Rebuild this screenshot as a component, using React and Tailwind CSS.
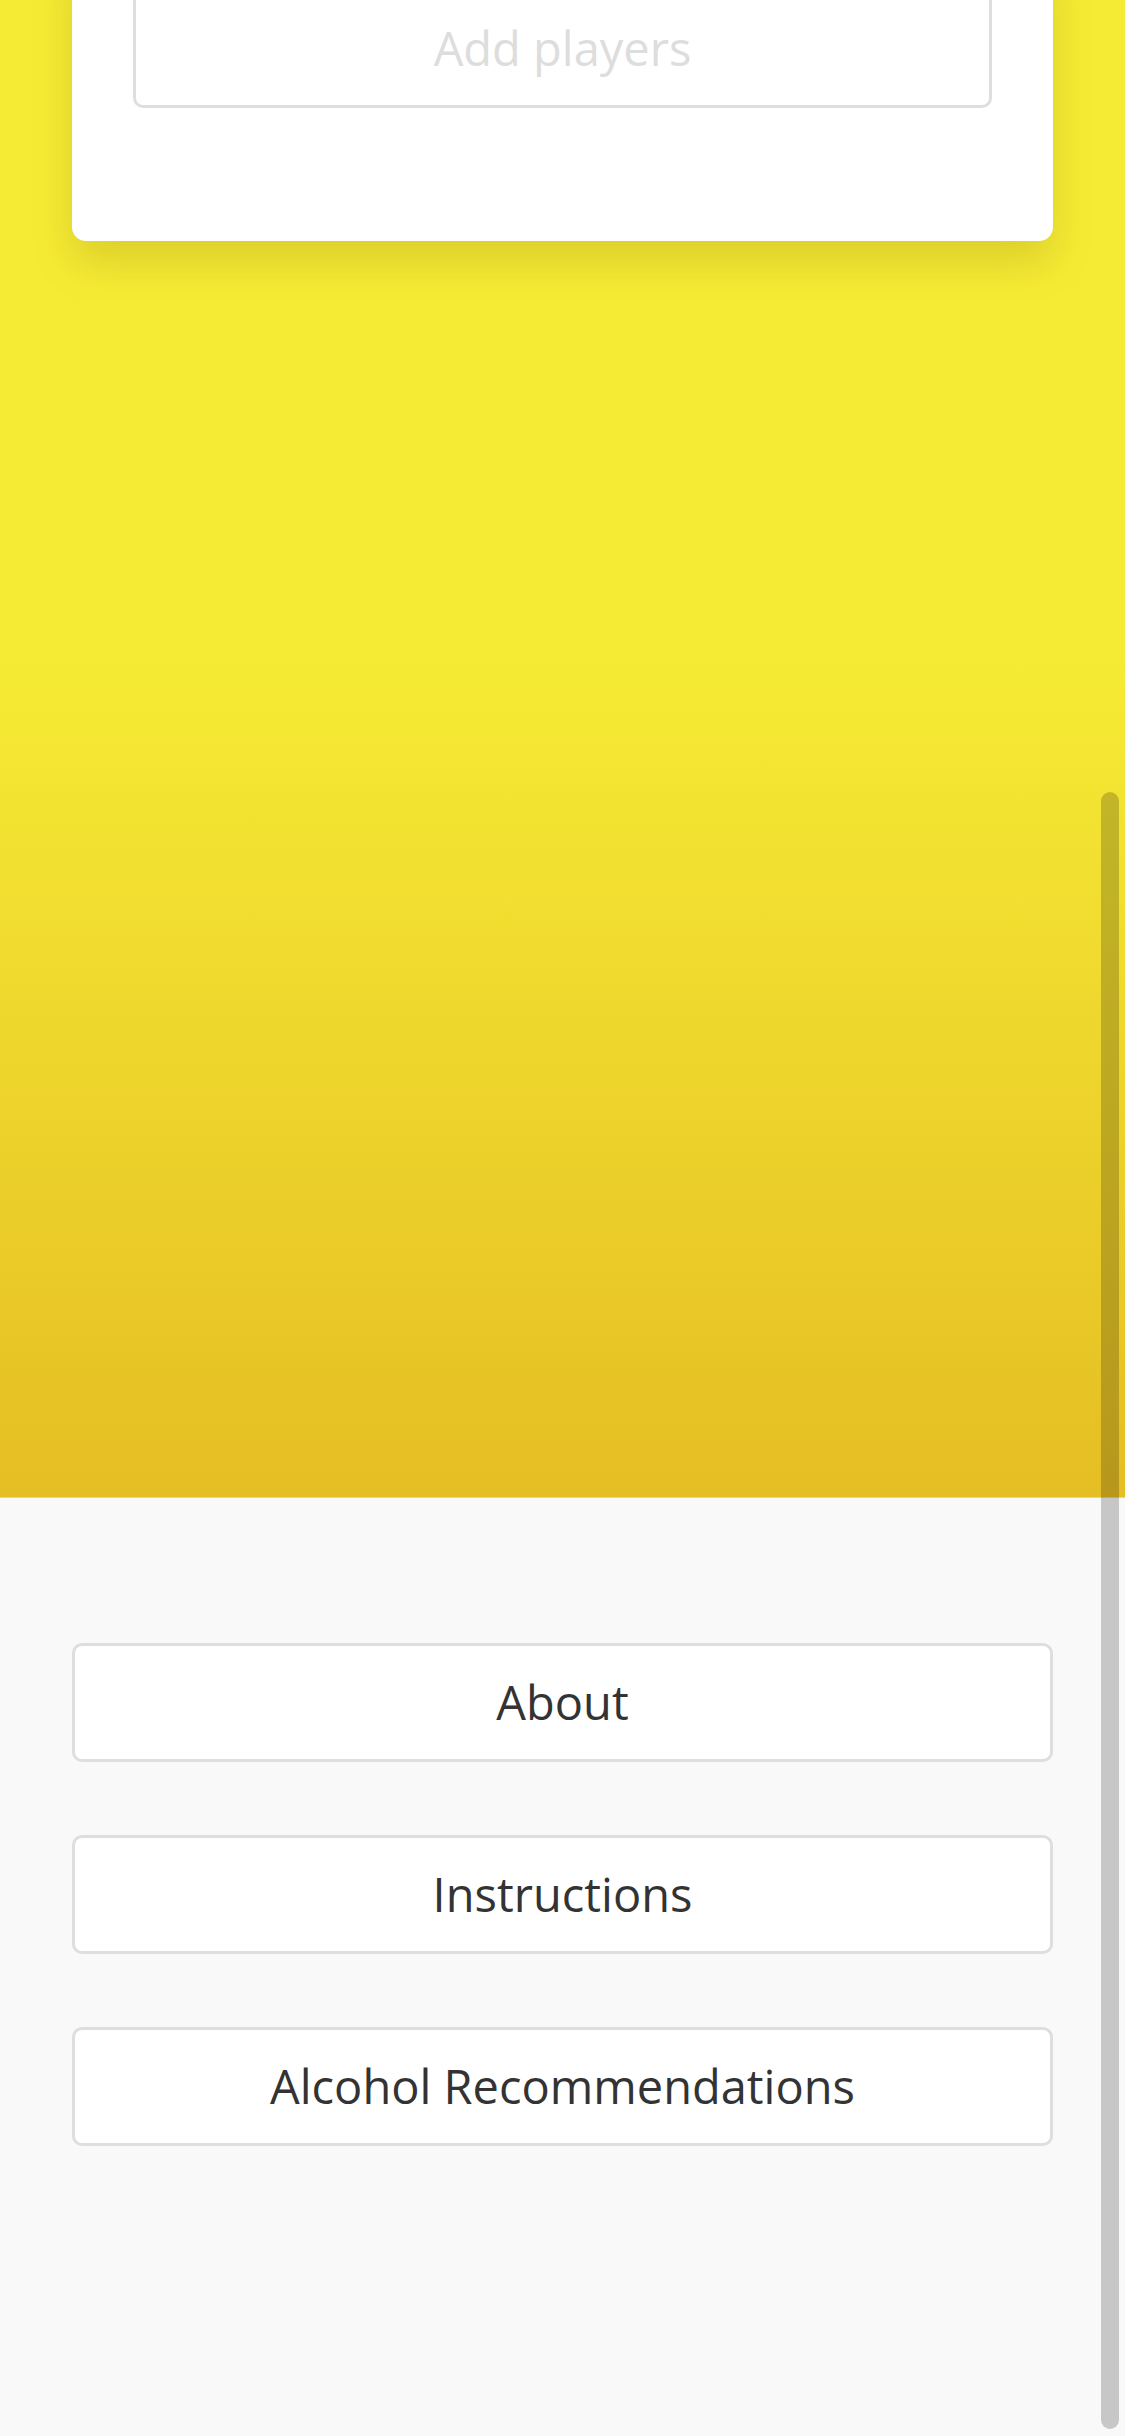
import React from "react";

const MENU = ["About", "Instructions", "Alcohol Recommendations"];

export default function App() {
	return (
		<div
			className="relative w-[1125px] h-[2436px] overflow-hidden bg-[#f9f9f9]"
			style={{ fontFamily: '"Open Sans", "Noto Sans", sans-serif' }}
		>
			{/* Yellow header area with the players card */}
			<div className="flex h-[1498px] flex-col border-b border-[#efdc6e] bg-[linear-gradient(180deg,#f6eb34_0%,#f6eb34_44%,#e5be23_100%)]">
				<div className="mx-[72px] -mt-[51px] rounded-b-[14px] bg-white px-[61px] pt-[40px] pb-[133px] shadow-[0_22px_40px_rgba(120,100,0,0.2)]">
					<button className="flex h-[119px] w-full items-center justify-center rounded-[10px] border-[3px] border-[#dedede] bg-white text-[47px] text-[#dddddd]">
						Add players
					</button>
				</div>
			</div>

			{/* Menu buttons */}
			<div className="flex flex-col gap-[73px] px-[72px] pt-[145px]">
				{MENU.map((label) => (
					<button
						key={label}
						className="flex h-[119px] w-full items-center justify-center rounded-[10px] border-[3px] border-[#dedede] bg-white text-[47px] text-[#333333]"
					>
						{label}
					</button>
				))}
			</div>

			{/* Scrollbar thumb */}
			<div className="absolute right-[6px] top-[792px] h-[1637px] w-[18px] rounded-full bg-black/20" />
		</div>
	);
}
